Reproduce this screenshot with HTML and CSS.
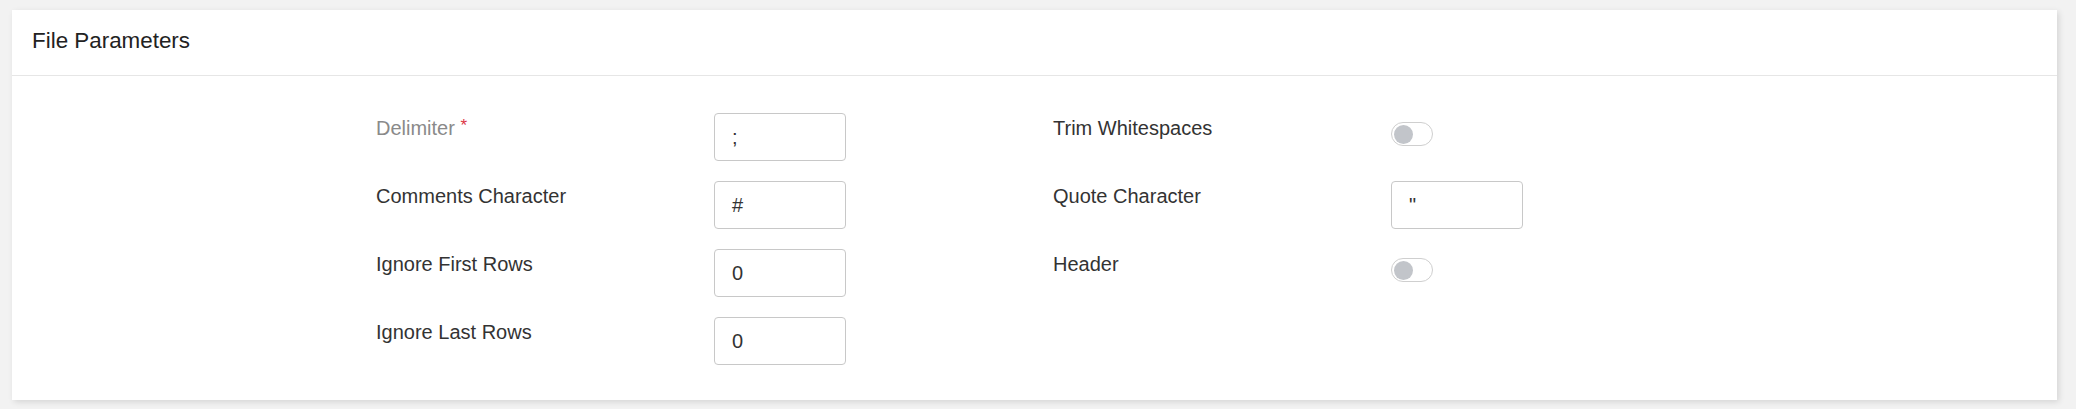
FILE: index.html
```html
<!DOCTYPE html>
<html lang="en">
<head>
<meta charset="utf-8">
<title>File Parameters</title>
<link rel="stylesheet" href="styles.css">
</head>
<body>
<div class="card">
  <div class="card-header">File Parameters</div>
  <div class="card-body">
    <div class="grid">
      <div class="col">
        <div class="field">
          <label class="label label-muted">Delimiter <span class="req">*</span></label>
          <div class="input">;</div>
        </div>
        <div class="field">
          <label class="label">Comments Character</label>
          <div class="input">#</div>
        </div>
        <div class="field">
          <label class="label">Ignore First Rows</label>
          <div class="input">0</div>
        </div>
        <div class="field">
          <label class="label">Ignore Last Rows</label>
          <div class="input">0</div>
        </div>
      </div>
      <div class="col">
        <div class="field">
          <label class="label">Trim Whitespaces</label>
          <div class="toggle"><span class="knob"></span></div>
        </div>
        <div class="field">
          <label class="label">Quote Character</label>
          <div class="input">"</div>
        </div>
        <div class="field">
          <label class="label">Header</label>
          <div class="toggle"><span class="knob"></span></div>
        </div>
      </div>
    </div>
  </div>
</div>
</body>
</html>
```
FILE: styles.css
```css
html, body {
  margin: 0;
  padding: 0;
  background: #f2f2f2;
  font-family: "Liberation Sans", Arial, sans-serif;
  color: #333;
}
body {
  padding: 10px 19px 9px 12px;
}
.card {
  background: #fff;
  box-shadow: 2px 2px 6px rgba(0, 0, 0, 0.12);
  height: 390px;
  box-sizing: border-box;
}
.card-header {
  height: 66px;
  box-sizing: border-box;
  padding: 17px 20px 0 20px;
  font-size: 22.4px;
  line-height: 28px;
  color: #222;
  border-bottom: 1px solid #e6e6e6;
}
.card-body {
  padding: 37px 0 35px 364px;
}
.grid {
  display: grid;
  grid-template-columns: 677px 677px;
}
.col {
  display: flex;
  flex-direction: column;
  gap: 20px;
}
.field {
  display: grid;
  grid-template-columns: 338px 132px;
  height: 48px;
  align-items: start;
}
.label {
  font-size: 20px;
  line-height: 30px;
  color: #333;
}
.label-muted {
  color: #8a8a8a;
}
.req {
  color: #dc3545;
  font-size: 17px;
  vertical-align: top;
  position: relative;
  top: -2px;
}
.input {
  box-sizing: border-box;
  height: 48px;
  border: 1px solid #c8c8c8;
  border-radius: 4px;
  padding: 0 17px;
  font-size: 20px;
  line-height: 46px;
  color: #333;
}
.toggle {
  margin-top: 9px;
  width: 42px;
  height: 24px;
  box-sizing: border-box;
  border: 1px solid #cfcfcf;
  border-radius: 12px;
  display: flex;
  align-items: center;
  padding-left: 2px;
}
.knob {
  width: 19px;
  height: 19px;
  border-radius: 50%;
  background: #c2c5ca;
}
```
